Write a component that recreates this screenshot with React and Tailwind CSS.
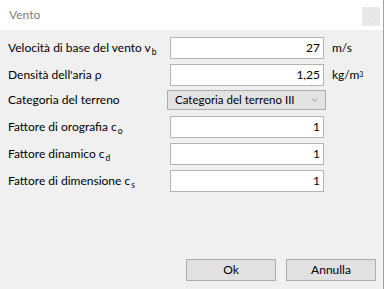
import { ChevronDown, X } from 'lucide-react';

const font = { fontFamily: 'Lato, "Noto Sans", sans-serif' };

const Field = ({ value, className }) => (
    <div className={`w-[154px] h-[22px] bg-white border border-[#b4b4b4] flex items-center justify-end pr-[3px] text-[12px] text-black ${className || ''}`}>
        {value}
    </div>
);

const Sub = ({ children }) => (
    <span className="text-[8.5px] relative top-[3px] ml-[1px]">{children}</span>
);

export default function App() {
    return (
        <div
            className="w-[384px] h-[289px] flex flex-col bg-[#f0f0f0] border-r border-[#a0a0a0] text-[12px] text-black overflow-hidden whitespace-nowrap"
            style={font}
        >
            {/* Title bar */}
            <div className="h-[30px] bg-white flex items-center justify-between pl-[9px] pr-[3px] shrink-0">
                <span className="text-[12px] text-[#7d7d7d]">Vento</span>
                <div className="w-[18px] h-[19px] bg-[#e8e8e8] flex items-center justify-center mt-[3px]">
                    <X size={7} strokeWidth={1.5} className="text-[#d0d0d0]" />
                </div>
            </div>

            {/* Body */}
            <div className="flex-1 flex flex-col pl-[8px] pt-[7px]">
                <div className="flex items-center">
                    <div className="w-[162px]">
                        Velocità di base del vento v<Sub>b</Sub>
                    </div>
                    <Field value="27" />
                    <span className="ml-[8px]">m/s</span>
                </div>

                <div className="flex items-center mt-[5px]">
                    <div className="w-[162px]">Densità dell'aria ρ</div>
                    <Field value="1,25" />
                    <span className="ml-[8px]">
                        kg/m<sup className="text-[7px] relative top-[-2px]">3</sup>
                    </span>
                </div>

                <div className="flex items-center mt-[4px]">
                    <div className="w-[159px]">Categoria del terreno</div>
                    <div className="w-[159px] h-[20px] bg-[#e3e3e3] border border-[#acacac] flex items-center justify-between pl-[7px] pr-[5px]">
                        <span className="text-[11.5px]">Categoria del terreno III</span>
                        <ChevronDown size={10} strokeWidth={1.5} className="text-[#6a6a6a]" />
                    </div>
                </div>

                <div className="flex items-center mt-[6px]">
                    <div className="w-[162px]">
                        Fattore di orografia c<Sub>o</Sub>
                    </div>
                    <Field value="1" />
                </div>

                <div className="flex items-center mt-[5px]">
                    <div className="w-[162px]">
                        Fattore dinamico c<Sub>d</Sub>
                    </div>
                    <Field value="1" />
                </div>

                <div className="flex items-center mt-[5px]">
                    <div className="w-[162px]">
                        Fattore di dimensione c<Sub>s</Sub>
                    </div>
                    <Field value="1" />
                </div>

                {/* Buttons */}
                <div className="mt-auto flex justify-end gap-[10px] pr-[7px] pb-[8px]">
                    <button className="w-[90px] h-[22px] bg-[#e1e1e1] border border-[#adadad] text-[12px]">
                        Ok
                    </button>
                    <button className="w-[90px] h-[22px] bg-[#e1e1e1] border border-[#adadad] text-[12px]">
                        Annulla
                    </button>
                </div>
            </div>
        </div>
    );
}
